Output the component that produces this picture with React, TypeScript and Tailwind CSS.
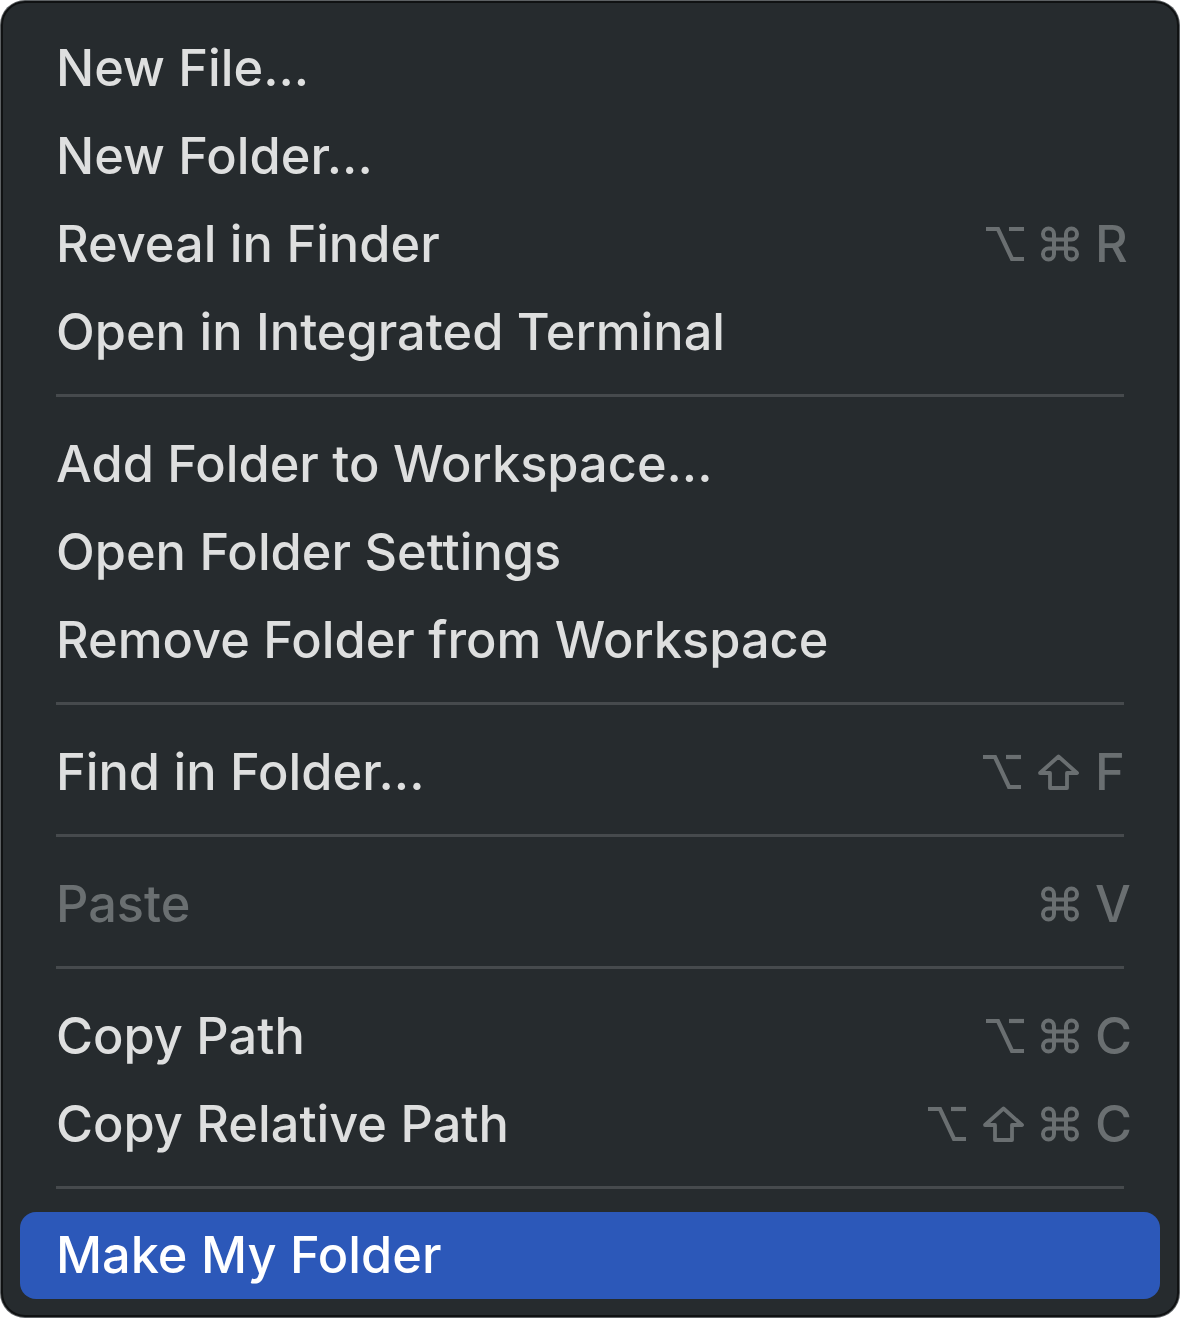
import type { ReactNode } from 'react';

type Key = 'opt' | 'cmd' | 'shift' | string;

type Item =
  | { kind: 'item'; label: string; keys?: Key[]; disabled?: boolean; active?: boolean }
  | { kind: 'sep' };

const items: Item[] = [
  { kind: 'item', label: 'New File...' },
  { kind: 'item', label: 'New Folder...' },
  { kind: 'item', label: 'Reveal in Finder', keys: ['opt', 'cmd', 'R'] },
  { kind: 'item', label: 'Open in Integrated Terminal' },
  { kind: 'sep' },
  { kind: 'item', label: 'Add Folder to Workspace...' },
  { kind: 'item', label: 'Open Folder Settings' },
  { kind: 'item', label: 'Remove Folder from Workspace' },
  { kind: 'sep' },
  { kind: 'item', label: 'Find in Folder...', keys: ['opt', 'shift', 'F'] },
  { kind: 'sep' },
  { kind: 'item', label: 'Paste', keys: ['cmd', 'V'], disabled: true },
  { kind: 'sep' },
  { kind: 'item', label: 'Copy Path', keys: ['opt', 'cmd', 'C'] },
  { kind: 'item', label: 'Copy Relative Path', keys: ['opt', 'shift', 'cmd', 'C'] },
  { kind: 'sep' },
  { kind: 'item', label: 'Make My Folder', active: true },
];

function OptionGlyph() {
  return (
    <svg width="40" height="36" viewBox="0 0 40 36" fill="none" stroke="currentColor" strokeWidth="4.2">
      <path d="M1 3 H13 L27 33 H39" />
      <path d="M24 3 H39" />
    </svg>
  );
}

function CommandGlyph() {
  return (
    <svg width="40" height="36" viewBox="0 0 40 36" fill="none" stroke="currentColor" strokeWidth="4">
      <path d="M14 12 V8 a5.5 5.5 0 1 0 -5.5 5.5 H31.5 a5.5 5.5 0 1 0 -5.5 -5.5 V28 a5.5 5.5 0 1 0 5.5 -5.5 H8.5 a5.5 5.5 0 1 0 5.5 5.5 Z" />
    </svg>
  );
}

function ShiftGlyph() {
  return (
    <svg width="43" height="36" viewBox="0 0 43 36" fill="none" stroke="currentColor" strokeWidth="3.8" strokeLinejoin="round">
      <path d="M21.5 2.5 L40 19 H30 V34 H13 V19 H3 Z" />
    </svg>
  );
}

function Shortcut({ keys }: { keys: Key[] }) {
  const parts: ReactNode[] = keys.map((k, i) => {
    if (k === 'opt') return <OptionGlyph key={i} />;
    if (k === 'cmd') return <CommandGlyph key={i} />;
    if (k === 'shift') return <ShiftGlyph key={i} />;
    return (
      <span key={i} className="w-[34px] text-left leading-none">
        {k}
      </span>
    );
  });
  return <div className="flex items-center gap-[15px] text-[#6a6f71]">{parts}</div>;
}

export default function App() {
  return (
    <div className="w-[1180px] h-[1318px] bg-white p-[1px]">
      <div
        className="h-full rounded-[24px] border-2 border-[#101213] bg-[#262b2e] pt-[21px] shadow-[0_0_0_1px_#5d6164] overflow-hidden"
        style={{ fontFamily: 'Inter, "Noto Sans", sans-serif' }}
      >
        {items.map((it, i) =>
          it.kind === 'sep' ? (
            <div key={i} className="h-[44px] pt-[18px] px-[53px]">
              <div className="h-[3px] w-full bg-[#464a4d]" />
            </div>
          ) : (
            <div
              key={i}
              className={
                'mx-[17px] flex items-center justify-between pl-[36px] pr-[31px] text-[50.5px] font-medium ' +
                (it.active
                  ? 'h-[87px] rounded-[16px] bg-[#2c58b9] text-white'
                  : it.disabled
                    ? 'h-[88px] text-[#6a6f71]'
                    : 'h-[88px] text-[#dedfdf]')
              }
            >
              <span className="leading-none">{it.label}</span>
              {it.keys && <Shortcut keys={it.keys} />}
            </div>
          ),
        )}
      </div>
    </div>
  );
}
